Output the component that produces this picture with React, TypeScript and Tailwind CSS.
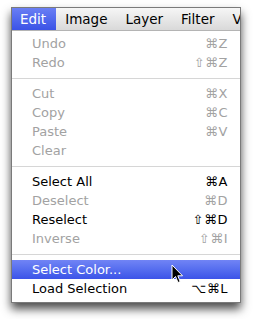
import React from "react";

type Item =
  | { sep: true }
  | { label: string; sc?: string; dis?: boolean; hi?: boolean };

const items: Item[] = [
  { label: "Undo", sc: "⌘Z", dis: true },
  { label: "Redo", sc: "⇧⌘Z", dis: true },
  { sep: true },
  { label: "Cut", sc: "⌘X", dis: true },
  { label: "Copy", sc: "⌘C", dis: true },
  { label: "Paste", sc: "⌘V", dis: true },
  { label: "Clear", dis: true },
  { sep: true },
  { label: "Select All", sc: "⌘A" },
  { label: "Deselect", sc: "⌘D", dis: true },
  { label: "Reselect", sc: "⇧⌘D" },
  { label: "Inverse", sc: "⇧⌘I", dis: true },
  { sep: true },
  { label: "Select Color...", hi: true },
  { label: "Load Selection", sc: "⌥⌘L" },
];

export default function App() {
  return (
    <div
      className="w-[253px] h-[319px] bg-white relative overflow-hidden pt-[7px] pl-[11px]"
      style={{ fontFamily: '"DejaVu Sans", sans-serif' }}
    >
      <div className="w-[230px] h-[296px] bg-white border border-[#7a7a7a] shadow-[0_6px_9px_rgba(0,0,0,0.7)] flex flex-col overflow-hidden">
        <div className="h-[23px] flex items-stretch bg-gradient-to-b from-[#f6f6f6] to-[#d9d9d9] border-b border-[#b4b4b4] text-[13.5px] text-black whitespace-nowrap">
          <div className="pl-[8px] pr-[10px] flex items-center text-white bg-gradient-to-b from-[#6a7ef4] to-[#3b52e6]">
            Edit
          </div>
          <div className="pl-[9px] pr-[9px] flex items-center">Image</div>
          <div className="pl-[9px] pr-[9px] flex items-center">Layer</div>
          <div className="pl-[9px] pr-[9px] flex items-center">Filter</div>
          <div className="pl-[9px] flex items-center">V</div>
        </div>
        <div className="flex flex-col pt-[3px] text-[13px]">
          {items.map((it, i) =>
            "sep" in it ? (
              <div key={i} className="h-[12px] flex items-center">
                <div className="w-full h-px bg-[#d6d6d6]" />
              </div>
            ) : (
              <div
                key={i}
                className={
                  "h-[19px] flex items-center justify-between pl-[20px] pr-[12px] " +
                  (it.hi
                    ? "bg-gradient-to-b from-[#7184f5] to-[#3c53e8] text-white"
                    : it.dis
                    ? "text-[#a2a2a2]"
                    : "text-black")
                }
              >
                <span>{it.label}</span>
                {it.sc && <span className="tracking-[0.5px]">{it.sc}</span>}
              </div>
            )
          )}
        </div>
      </div>
      <svg
        className="absolute left-[171px] top-[264px]"
        width="13"
        height="20"
        viewBox="0 0 13 20"
      >
        <path
          d="M1 1 L1 16 L4.5 12.5 L7 18.5 L9.2 17.6 L6.8 11.8 L11.5 11.8 Z"
          fill="#000"
          stroke="#fff"
          strokeWidth="1"
          strokeLinejoin="round"
        />
      </svg>
    </div>
  );
}
